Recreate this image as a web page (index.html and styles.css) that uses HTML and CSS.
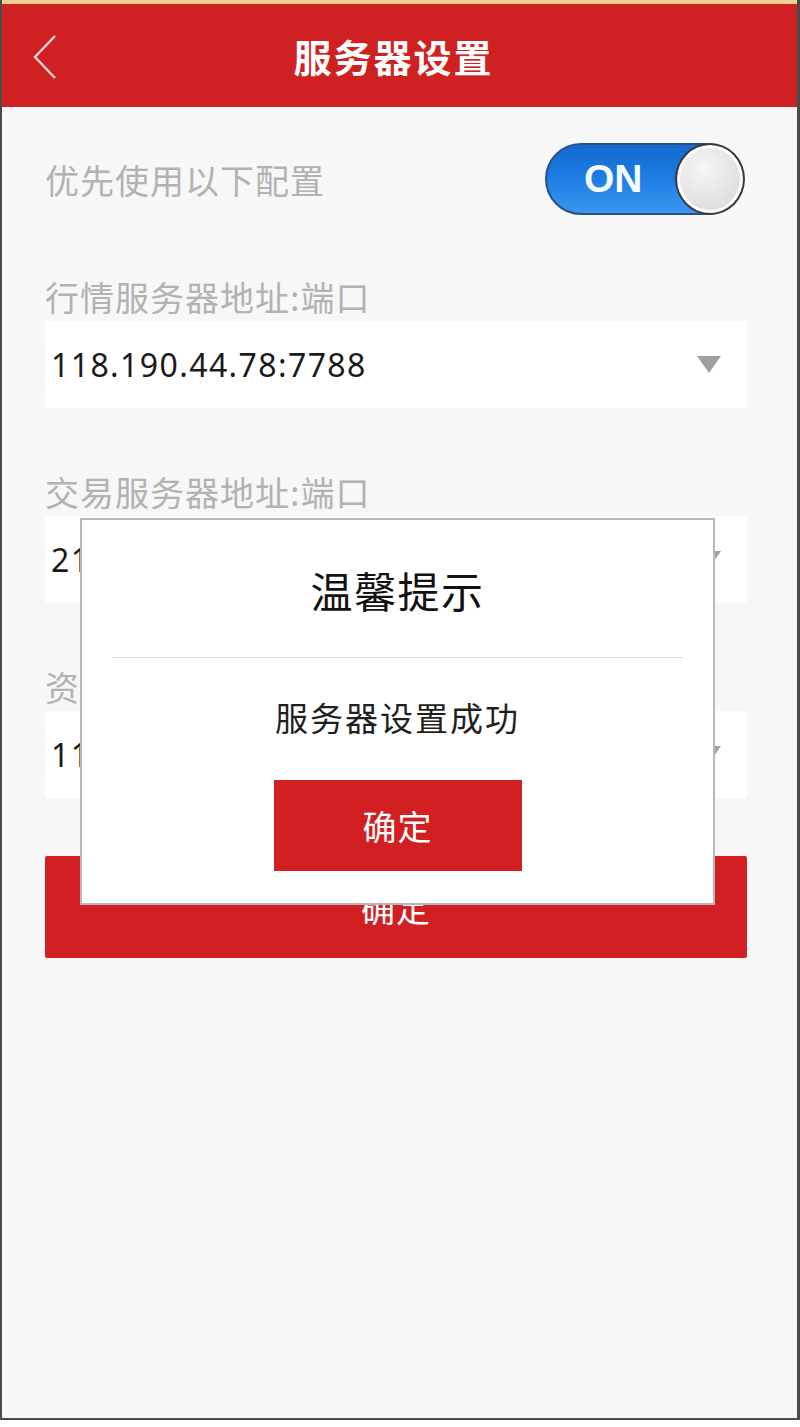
FILE: index.html
```html
<!DOCTYPE html>
<html lang="zh-CN">
<head>
<meta charset="utf-8">
<title>服务器设置</title>
<link rel="stylesheet" href="styles.css">
</head>
<body>
<div class="screen">
  <header class="topbar">
    <svg class="back" width="30" height="50" viewBox="0 0 30 50" aria-hidden="true">
      <polyline points="23,4 3,25 23,46" fill="none" stroke="#f6d6d0" stroke-width="2.4"/>
    </svg>
    <h1 class="title">服务器设置</h1>
  </header>

  <main class="content">
    <div class="pref-row">
      <span class="pref-label">优先使用以下配置</span>
      <div class="toggle">
        <span class="toggle-text">ON</span>
        <span class="knob"></span>
      </div>
    </div>

    <div class="group">
      <div class="label">行情服务器地址:端口</div>
      <div class="field">
        <span class="value">118.190.44.78:7788</span>
        <span class="caret"></span>
      </div>
    </div>

    <div class="group">
      <div class="label">交易服务器地址:端口</div>
      <div class="field">
        <span class="value">210.14.72.60:7708</span>
        <span class="caret"></span>
      </div>
    </div>

    <div class="group">
      <div class="label">资讯服务器地址:端口</div>
      <div class="field">
        <span class="value">118.190.44.78:7799</span>
        <span class="caret"></span>
      </div>
    </div>

    <button class="primary">确定</button>
  </main>

  <div class="dialog">
    <div class="dialog-title">温馨提示</div>
    <div class="dialog-divider"></div>
    <div class="dialog-msg">服务器设置成功</div>
    <button class="dialog-btn">确定</button>
  </div>
</div>
</body>
</html>
```

FILE: styles.css
```css
* { box-sizing: border-box; }

html, body {
  margin: 0;
  padding: 0;
  background: #ffffff;
}

body {
  font-family: "Noto Sans CJK SC", "Noto Sans", sans-serif;
}

.screen {
  position: relative;
  width: 800px;
  height: 1420px;
  background: #f7f7f7;
  border-left: 2px solid #4a4a4a;
  border-right: 3px solid #4a4a4a;
  border-bottom: 2px solid #4a4a4a;
}

.topbar {
  position: relative;
  height: 107px;
  border-top: 4px solid #f1cf94;
  background: #cf2121;
  display: flex;
  align-items: center;
  justify-content: center;
  padding-right: 12px;
}

.back {
  position: absolute;
  left: 30px;
  top: 28px;
}

.title {
  margin: 0;
  color: #ffffff;
  font-size: 38px;
  font-weight: 700;
  letter-spacing: 2px;
  line-height: 1;
}

.content {
  padding: 36px 50px 0 43px;
}

.pref-row {
  display: flex;
  align-items: center;
  justify-content: space-between;
  height: 72px;
}

.pref-label {
  color: #b2b2b2;
  font-size: 34px;
  letter-spacing: 1px;
}

.toggle {
  position: relative;
  width: 198px;
  height: 72px;
  margin-right: 4px;
  border-radius: 36px;
  border: 2px solid #2c4f80;
  background: linear-gradient(#1569cf 0%, #1c7be2 45%, #3a97f0 100%);
  display: flex;
  align-items: center;
  padding-left: 37px;
}

.toggle-text {
  color: #f4fbff;
  font-family: "Liberation Sans", "Noto Sans", sans-serif;
  font-weight: 700;
  font-size: 39px;
  letter-spacing: 0;
}

.knob {
  position: absolute;
  right: -4px;
  top: -2px;
  width: 70px;
  height: 72px;
  border-radius: 50%;
  border: 2px solid #3a3a3a;
  background: radial-gradient(circle at 40% 35%, #f6f6f6 0%, #dedede 70%, #cfcfcf 100%);
  box-shadow: inset 0 0 0 3px #ffffff;
}

.group {
  margin-top: 62px;
}

.group + .group {
  margin-top: 64px;
}

.label {
  height: 40px;
  line-height: 40px;
  color: #b2b2b2;
  font-size: 34px;
  letter-spacing: 1px;
  margin-bottom: 4px;
}

.field {
  height: 87px;
  background: #ffffff;
  display: flex;
  align-items: center;
  justify-content: space-between;
  padding: 0 26px 0 6px;
}

.value {
  color: #1a1a1a;
  font-family: "Noto Sans", sans-serif;
  font-size: 32px;
  letter-spacing: 1.4px;
}

.caret {
  width: 0;
  height: 0;
  border-left: 12px solid transparent;
  border-right: 12px solid transparent;
  border-top: 17px solid #a0a0a0;
}

.primary {
  display: flex;
  align-items: center;
  justify-content: center;
  width: 100%;
  height: 102px;
  margin-top: 58px;
  border: none;
  border-radius: 2px;
  background: #d21f22;
  color: #ffffff;
  font-family: "Noto Sans CJK SC", sans-serif;
  font-size: 34px;
  letter-spacing: 1px;
}

.dialog {
  position: absolute;
  left: 78px;
  top: 518px;
  width: 635px;
  height: 387px;
  background: #ffffff;
  border: 2px solid #b8b8b8;
  display: flex;
  flex-direction: column;
  align-items: center;
  padding: 40px 30px 0;
}

.dialog-title {
  height: 60px;
  line-height: 60px;
  font-size: 42px;
  color: #111111;
  letter-spacing: 1.5px;
}

.dialog-divider {
  align-self: stretch;
  height: 1px;
  margin-top: 37px;
  background: #dcdcdc;
}

.dialog-msg {
  margin-top: 39px;
  height: 40px;
  line-height: 40px;
  font-size: 33px;
  color: #1f1f1f;
  letter-spacing: 2px;
}

.dialog-btn {
  margin-top: 43px;
  width: 248px;
  height: 91px;
  border: none;
  background: #d21f22;
  color: #ffffff;
  font-family: "Noto Sans CJK SC", sans-serif;
  font-size: 34px;
  letter-spacing: 1px;
}
```
